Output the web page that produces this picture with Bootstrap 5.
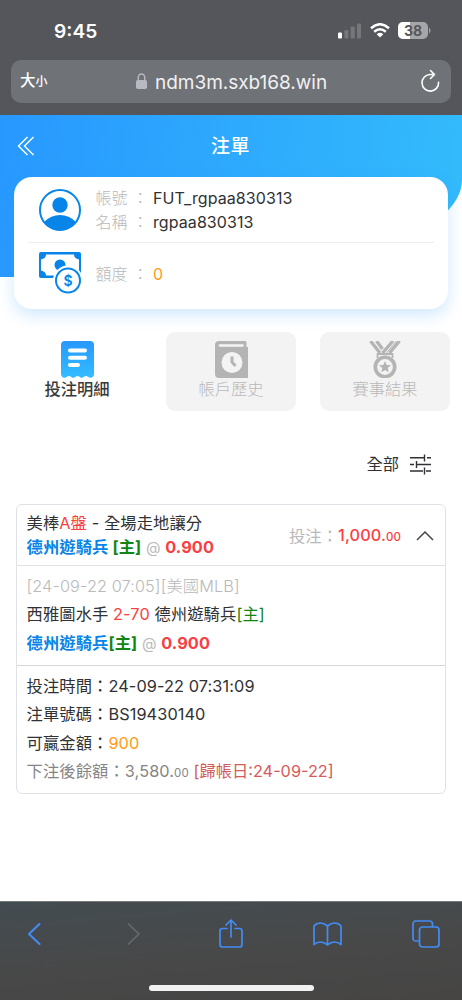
<!DOCTYPE html>
<html lang="zh-Hant">
<head>
<meta charset="utf-8">
<meta name="viewport" content="width=device-width, initial-scale=1">
<title>注單</title>
<link href="https://cdn.jsdelivr.net/npm/bootstrap@5.3.0/dist/css/bootstrap.min.css" rel="stylesheet">
<style>
body{font-family:Inter,"Noto Sans CJK TC",sans-serif;font-size:16.3px;line-height:24px;color:#303134;background:#fff;height:1000px;overflow:hidden;white-space:nowrap}
svg{display:block;flex:none}
.chrome-top{height:115px;background:#55565b;color:#fff}
.status{height:60px;padding:1px 31px 0 54px}
.clock{font-size:19.2px;font-weight:600}
.address{height:43px;margin:0 11px;border-radius:10px;background:#6f7277}
.size-btn{width:124px;padding-left:9px;font-weight:500}
.size-btn .big{font-size:15.5px}
.size-btn .little{font-size:12px}
.url{margin-left:7px;padding-top:2px;font-size:19px;letter-spacing:-.02px;color:#f1f1f2}
.hero{height:162px;background:linear-gradient(95deg,#2898ff,#33bbfb);border-bottom-right-radius:280px 97px;color:#fff}
.hero-bar{height:62px}
.page-title{font-size:19px;font-weight:500;letter-spacing:.4px;padding:1px 36px 0 0}
.account{height:132px;margin:-100px 14px 0;border-radius:18px;background:#fff;box-shadow:0 6px 16px rgba(40,152,255,.22);padding:0 14px}
.account-row{padding-left:11px}
.account-row.first{height:66px;border-bottom:1.5px solid #eee}
.account-row.second{height:60px}
.account-text{margin-left:14.5px;padding-top:1px;font-size:16px;letter-spacing:.08px}
.muted{color:#b9b9b9}
.lbl{width:57.5px;font-weight:300;white-space:pre}
.orange{color:#ff9b19}.red{color:#fb3e42}.blue{color:#0785e8}.green{color:#118512}
.tabs{margin:23px 12px 0;display:grid;grid-template-columns:130px 130px 130px;column-gap:24px}
.tab-item{height:79px;border-radius:9px;padding-top:9px;background:#f3f3f3;color:#b9b9b9;font-weight:300}
.tab-item span{margin-top:-1px}
.tab-item.on{background:none;color:#3a3a3a;font-weight:500}
.filter{height:24px;margin:41px 31px 0 0}
.bet{margin:28px 16px 0;height:290px;border:1.5px solid #dfe3e8;border-radius:6px;letter-spacing:.1px}
.bet-head{height:61px;border-bottom:1.5px solid #dfe3e8;padding:6px 11px 0 9.500px}
.bet-sum{height:49px}
.bet-mid{height:100px;border-bottom:1.5px solid #d5d7da;padding:6px 9.500px 0;line-height:28.3px}
.bet-end{padding:6px 9.500px 0;line-height:28.3px}
.cents{font-size:11.5px}
.at{color:#b9b9b9;font-size:15px}
.chrome-bottom{height:99px;margin-top:107px;border-top:1px solid #777b7e;background:linear-gradient(175deg,#434c51 0,#484848 55%,#464544 100%)}
.tools{height:63px;padding:0 22px 0 20px}
.home-bar{width:165px;height:6px;border-radius:3px;background:#f1f1f1;margin:20px auto 0}
</style>
</head>
<body>
<header class="chrome-top">
  <div class="status d-flex justify-content-between align-items-center">
    <span class="clock">9:45</span>
    <div class="d-flex align-items-center">
      <svg width="24" height="16" viewBox="0 0 24 16"><rect y="9.500" width="4" height="6" rx="1" fill="#fff"/><g fill="#76777b"><rect x="6.400" y="7" width="4" height="8.500" rx="1"/><rect x="12.700" y="3.500" width="4" height="12" rx="1"/><rect x="19" y=".5" width="4" height="15" rx="1"/></g></svg>
      <svg class="ms-2" width="20" height="15" viewBox="0 0 20 15" fill="none" stroke="#fff" stroke-width="2.500"><path d="M1 5.200Q10-2.700 19 5.200M4.200 8.700Q10 3.700 15.800 8.700"/><path d="M6.700 11.200Q10 8.500 13.300 11.200L10 14.500Z" fill="#fff" stroke="none"/></svg>
      <svg class="ms-2" width="33" height="17" viewBox="0 0 33 17"><rect width="30" height="17" rx="5" fill="#a5a6a8"/><path d="M12 0H5a5 5 0 0 0-5 5v7a5 5 0 0 0 5 5h7z" fill="#fff"/><path d="M31 5.500q3 3 0 6z" fill="#a5a6a8"/><text x="15" y="13.500" text-anchor="middle" font-family="Inter" font-size="14" font-weight="700" fill="#55565b">38</text></svg>
    </div>
  </div>
  <div class="address d-flex align-items-center">
    <div class="size-btn d-flex align-items-baseline"><span class="big">大</span><span class="little">小</span></div>
    <svg width="13" height="17" viewBox="0 0 13 17"><rect x="1" y="7" width="11" height="9" rx="1.700" fill="#b9b9c1"/><path d="M3.200 7V4.700a3.300 3.700 0 0 1 6.600 0V7" fill="none" stroke="#b9b9c1" stroke-width="1.400"/></svg>
    <span class="url">ndm3m.sxb168.win</span>
    <svg class="ms-auto me-2" width="24" height="26" viewBox="0 0 24 26" fill="none" stroke="#fff" stroke-width="1.600" stroke-linecap="round" stroke-linejoin="round"><path d="M19.600 13.300A8.300 8.300 0 1 1 11.300 5.500H15M11.500 1.500l4 4-4 4"/></svg>
  </div>
</header>
<main>
  <section class="hero">
    <div class="hero-bar d-flex align-items-center">
      <svg style="margin-left:17px" width="18" height="20" viewBox="0 0 18 20" fill="none" stroke="#fff" stroke-width="1.400"><path d="M10.500 1 1.500 10l9 9M16.500 1l-9 9 9 9"/></svg>
      <span class="page-title flex-fill text-center">注單</span>
    </div>
  </section>
  <section class="account position-relative">
    <div class="account-row first d-flex align-items-center">
      <svg width="42" height="42" viewBox="0 0 42 42"><defs><clipPath id="disc"><circle cx="21" cy="21" r="20.500"/></clipPath></defs><circle cx="21" cy="21" r="20" fill="none" stroke="#0785e8" stroke-width="2"/><circle cx="21" cy="16" r="7.700" fill="#0785e8"/><path d="M5 33Q12 26 21 26t16 7q-5 9-16 9T5 33" fill="#0785e8" clip-path="url(#disc)"/></svg>
      <div class="account-text">
        <div class="d-flex"><span class="lbl muted">帳號 ：</span><span>FUT_rgpaa830313</span></div>
        <div class="d-flex"><span class="lbl muted">名稱 ：</span><span>rgpaa830313</span></div>
      </div>
    </div>
    <div class="account-row second d-flex align-items-center">
      <svg width="42" height="42" viewBox="0 0 42 42"><path fill-rule="evenodd" fill="#0785e8" d="M2 0h38q2 0 2 2v22q0 2-2 2H2q-2 0-2-2V2Q0 0 2 0m5 2.500q0 4-5 5v11q5 1 5 5h28q0-4 5-5v-11q-5-1-5-5z"/><circle cx="21" cy="13" r="5.500" fill="#0785e8"/><circle cx="29" cy="28.500" r="15" fill="#fff"/><circle cx="29" cy="28.500" r="12" fill="none" stroke="#0785e8" stroke-width="2"/><text x="29" y="33.500" text-anchor="middle" font-family="Inter" font-size="14" font-weight="600" fill="#0785e8">$</text></svg>
      <div class="account-text d-flex"><span class="lbl muted">額度 ：</span><span class="orange">0</span></div>
    </div>
  </section>
  <nav class="tabs">
    <div class="tab-item on d-flex flex-column align-items-center">
      <svg width="33" height="37" viewBox="0 0 33 37"><defs><linearGradient id="bill" x2="0" y2="1"><stop stop-color="#2898ff"/><stop offset="1" stop-color="#33bdff"/></linearGradient></defs><path fill="url(#bill)" d="M4 0h25q4 0 4 4v29q0 3-2 3.500-2 .800-4-.700-2-1.700-4 0-2.500 2.200-4.500 0-2-1.700-4 0-2.500 2.200-4.500 0-2-1.700-4 0Q4 37.300 2 36.500 0 36 0 33V4q0-4 4-4"/><path d="M9 9.500h15M9 16.700h15M9 24h8" stroke="#fff" stroke-width="4" stroke-linecap="round"/></svg>
      <span>投注明細</span>
    </div>
    <div class="tab-item d-flex flex-column align-items-center">
      <svg width="33" height="37" viewBox="0 0 33 37"><path fill="#b4b4b4" d="M4 0h26q1.500 0 1.500 1.500V6H33v31H4q-4 0-4-4V4q0-4 4-4"/><path d="M5 3.200h23.500v2.500H5q-1.300 0-1.300-1.200T5 3.200" fill="#f3f3f3"/><circle cx="17" cy="21.500" r="10.500" fill="#f3f3f3"/><path d="M17 15.500V21l3.500 4" fill="none" stroke="#b4b4b4" stroke-width="3"/></svg>
      <span>帳戶歷史</span>
    </div>
    <div class="tab-item d-flex flex-column align-items-center">
      <svg width="34" height="37" viewBox="0 0 34 37"><g stroke="#b4b4b4" fill="none"><path d="M2.500 0l9.500 12M8.500 0l6 8" stroke-width="3.300"/><path d="M25 0 14.500 12M31.500 0 21.500 12" stroke-width="3.300"/><path d="M28.500 0 18.500 12" stroke-width="1"/><path d="M9.500 17v-4h15v4" stroke-width="1.800"/><circle cx="17" cy="26" r="9.700" stroke-width="3.600" fill="#f3f3f3"/></g><path fill="#b4b4b4" d="m17 20 1.700 4 4.300.3-3.300 2.800 1 4.200L17 29l-3.700 2.300 1-4.200-3.300-2.800 4.300-.3z"/></svg>
      <span>賽事結果</span>
    </div>
  </nav>
  <div class="filter d-flex justify-content-end align-items-center">
    <span style="margin-right:11px">全部</span>
    <svg width="21" height="21" viewBox="0 0 21 21" fill="none" stroke="#303134" stroke-width="1.400"><path d="M0 3.700h15M17 3.700h4M14.500.5v7M0 10.500h4M6.500 10.500H21M6.500 7v7M0 17h13M16 17h5M14.500 13.500v7"/></svg>
  </div>
  <article class="bet">
    <div class="bet-head d-flex justify-content-between">
      <div>
        <div>美棒<span class="red">A盤</span> - 全場走地讓分</div>
        <div><b><span class="blue">德州遊騎兵</span> <span class="green">[主]</span></b> <span class="at">@</span> <b class="red">0.900</b></div>
      </div>
      <div class="bet-sum d-flex align-items-center">
        <span class="muted">投注：</span><span class="red fw-medium" style="font-weight:500">1,000.<span class="cents">00</span></span>
        <svg style="margin-left:15px" width="18" height="11" viewBox="0 0 18 11" fill="none" stroke="#444" stroke-width="1.500"><path d="m1 10 8-8 8 8"/></svg>
      </div>
    </div>
    <div class="bet-mid">
      <div class="muted fw-light">[24-09-22 07:05][美國MLB]</div>
      <div>西雅圖水手 <span class="red">2-70</span> 德州遊騎兵<span class="green">[主]</span></div>
      <div><b><span class="blue">德州遊騎兵</span><span class="green">[主]</span></b> <span class="at">@</span> <b class="red">0.900</b></div>
    </div>
    <div class="bet-end">
      <div>投注時間：24-09-22 07:31:09</div>
      <div>注單號碼：BS19430140</div>
      <div>可贏金額：<span class="orange">900</span></div>
      <div style="color:#858585">下注後餘額：3,580.<span class="cents">00</span> <span style="color:#d45b5b;letter-spacing:0">[歸帳日:24-09-22]</span></div>
    </div>
  </article>
</main>
<footer class="chrome-bottom">
  <div class="tools d-flex justify-content-between align-items-center">
    <svg width="28" height="22" viewBox="-7 0 28 22" fill="none" stroke="#438cf6" stroke-width="2" stroke-linecap="round" stroke-linejoin="round"><path d="M12.500 1 2 11l10.500 10"/></svg>
    <svg width="28" height="22" viewBox="-9 0 28 22" fill="none" stroke="#68696b" stroke-width="1.700" stroke-linecap="round" stroke-linejoin="round"><path d="m1.500 1 10.500 10L1.500 21"/></svg>
    <svg width="28" height="30" viewBox="-3 0 28 30" fill="none" stroke="#438cf6" stroke-width="1.700" stroke-linecap="round" stroke-linejoin="round"><path d="M8 9.500H3.500Q1 9.500 1 12v13.500Q1 28 3.500 28h17q2.500 0 2.500-2.500V12q0-2.500-2.500-2.500H16M12 18V1.500M7 6l5-5 5 5"/></svg>
    <svg width="29" height="24" viewBox="0 0 29 24" fill="none" stroke="#438cf6" stroke-width="1.700" stroke-linejoin="round"><path d="M14.500 4Q11 1 7.500 1 3.500 1 1 4v18.500q3-2.500 6.500-2.500t7 2.800q3.500-2.800 7-2.800t6.500 2.500V4q-2.500-3-6.500-3-3.500 0-7 3zv18"/></svg>
    <svg width="28" height="28" viewBox="0 0 28 28" fill="none" stroke="#438cf6" stroke-width="1.700"><path d="M7.500 21H4q-3 0-3-3V4q0-3 3-3h13.500q3 0 3 3v3"/><rect x="7.500" y="7" width="19.500" height="20" rx="3"/></svg>
  </div>
  <div class="home-bar"></div>
</footer>
<script src="https://cdn.jsdelivr.net/npm/bootstrap@5.3.0/dist/js/bootstrap.bundle.min.js"></script>
</body>
</html>
